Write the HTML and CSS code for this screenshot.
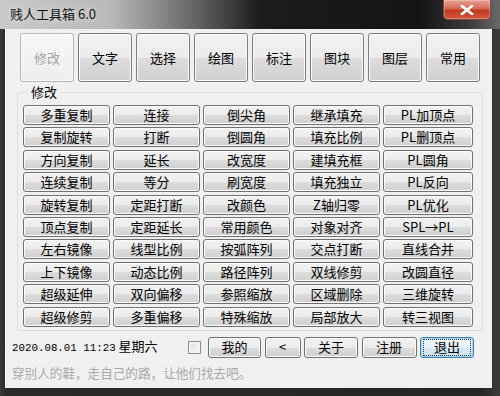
FILE: index.html
```html
<!DOCTYPE html>
<html lang="zh-CN">
<head>
    <meta charset="UTF-8">
    <title>贱人工具箱 6.0</title>
    <link rel="stylesheet" href="styles.css">
</head>
<body>
    <div class="window">
        <div class="titlebar">
            <span class="title">贱人工具箱 6.0</span>
            <span class="close">
                <svg width="14" height="10" viewBox="0 0 14 10"><path d="M2 1 L12 9 M12 1 L2 9" stroke="#fff" stroke-width="2.6" stroke-linecap="square"/></svg>
            </span>
        </div>
        <div class="client">
            <div class="tabs">
                <span class="btn tab on">修改</span>
                <span class="btn tab">文字</span>
                <span class="btn tab">选择</span>
                <span class="btn tab">绘图</span>
                <span class="btn tab">标注</span>
                <span class="btn tab">图块</span>
                <span class="btn tab">图层</span>
                <span class="btn tab">常用</span>
            </div>
            <div class="group">
                <div class="group-title">修改</div>
                <div class="grid">
                    <span class="btn">多重复制</span><span class="btn">连接</span><span class="btn">倒尖角</span><span class="btn">继承填充</span><span class="btn">PL加顶点</span>
                    <span class="btn">复制旋转</span><span class="btn">打断</span><span class="btn">倒圆角</span><span class="btn">填充比例</span><span class="btn">PL删顶点</span>
                    <span class="btn">方向复制</span><span class="btn">延长</span><span class="btn">改宽度</span><span class="btn">建填充框</span><span class="btn">PL圆角</span>
                    <span class="btn">连续复制</span><span class="btn">等分</span><span class="btn">刷宽度</span><span class="btn">填充独立</span><span class="btn">PL反向</span>
                    <span class="btn">旋转复制</span><span class="btn">定距打断</span><span class="btn">改颜色</span><span class="btn">Z轴归零</span><span class="btn">PL优化</span>
                    <span class="btn">顶点复制</span><span class="btn">定距延长</span><span class="btn">常用颜色</span><span class="btn">对象对齐</span><span class="btn">SPL→PL</span>
                    <span class="btn">左右镜像</span><span class="btn">线型比例</span><span class="btn">按弧阵列</span><span class="btn">交点打断</span><span class="btn">直线合并</span>
                    <span class="btn">上下镜像</span><span class="btn">动态比例</span><span class="btn">路径阵列</span><span class="btn">双线修剪</span><span class="btn">改圆直径</span>
                    <span class="btn">超级延伸</span><span class="btn">双向偏移</span><span class="btn">参照缩放</span><span class="btn">区域删除</span><span class="btn">三维旋转</span>
                    <span class="btn">超级修剪</span><span class="btn">多重偏移</span><span class="btn">特殊缩放</span><span class="btn">局部放大</span><span class="btn">转三视图</span>
                </div>
            </div>
            <div class="bottom">
                <span class="date"><span class="num">2020.08.01 11:23</span> 星期六</span>
                <span class="check"></span>
                <div class="actions">
                    <span class="btn act w53">我的</span>
                    <span class="btn act w36">&lt;</span>
                    <span class="btn act w54">关于</span>
                    <span class="btn act w55">注册</span>
                    <span class="btn act w54 focus"><span class="dots">退出</span></span>
                </div>
            </div>
            <p class="motto">穿别人的鞋，走自己的路，让他们找去吧。</p>
        </div>
    </div>
</body>
</html>
```

FILE: styles.css
```css
body, div, p, span{
    margin:0;
    padding:0;
}
body{
    width:500px;
    height:396px;
    overflow:hidden;
    background:#1e1e1e;
    font-family:"Noto Sans CJK SC", "Liberation Sans", sans-serif;
    font-size:13px;
    color:#000;
}
.window{
    width:500px;
    height:396px;
    background:linear-gradient(to right, #3a3a3a 0px, #2a2a2a 6px, #262626 480px, #3c3c3c 500px);
}
.titlebar{
    height:29px;
    display:flex;
    align-items:flex-start;
    justify-content:space-between;
    background:linear-gradient(to right, #c9c9c9 0px, #b9b9b9 110px, #6a6a6a 190px, #1c1c1c 260px, #141414 420px, #3c3c3c 470px, #6a6a6a 500px);
}
.title{
    margin:6px 0 0 10px;
    line-height:16px;
    font-size:13px;
    color:#111;
    text-shadow:0 0 6px rgba(255,255,255,.8);
}
.close{
    width:46px;
    height:19px;
    margin-right:9px;
    display:flex;
    align-items:center;
    justify-content:center;
    border:1px solid #7a4a40;
    border-top:none;
    border-radius:0 0 5px 5px;
    background:linear-gradient(to bottom, #e9a294 0%, #d46a55 45%, #c13a22 55%, #d5583c 100%);
    box-shadow:inset 0 0 0 1px rgba(255,255,255,.25);
}
.client{
    height:359px;
    margin:0 8px 0 5px;
    padding-top:4px;
    box-sizing:border-box;
    background:#f0f0f0;
    border-left:1px solid #fafafa;
}
.btn{
    display:flex;
    align-items:center;
    justify-content:center;
    box-sizing:border-box;
    border:1px solid #707070;
    border-radius:3px;
    background:linear-gradient(to bottom, #f2f2f2 0%, #ebebeb 50%, #dddddd 51%, #cfcfcf 100%);
    box-shadow:inset 0 0 0 1px #fbfbfb;
    white-space:nowrap;
    line-height:16px;
}
.tabs{
    display:flex;
    gap:4px;
    padding-left:14px;
}
.tab{
    width:54px;
    height:49px;
    border-color:#7a7a7a;
}
.tab.on{
    color:#a3a3a3;
    border-color:#b5b5b5;
    background:linear-gradient(to bottom, #f7f7f7, #eeeeee);
}
.group{
    margin:10px 9px 0 11px;
    padding:0 0 3px 5px;
    border:1px solid #d5dfe5;
    border-radius:3px;
}
.group-title{
    width:fit-content;
    margin:-8px 0 0 5px;
    padding:0 3px;
    line-height:14px;
    background:#f0f0f0;
}
.grid{
    margin-top:6px;
    display:grid;
    grid-template-columns:repeat(4, 87px) 90px;
    grid-auto-rows:20px;
    column-gap:3px;
    row-gap:2.4px;
}
.bottom{
    display:flex;
    align-items:center;
    height:21px;
    margin-top:6px;
    padding-left:6px;
}
.date{
    width:176px;
    line-height:16px;
}
.num{
    font-family:"Liberation Mono", monospace;
    font-size:10.8px;
}
.check{
    width:13px;
    height:13px;
    box-sizing:border-box;
    border:1px solid #8e8f8f;
    background:linear-gradient(135deg, #dcdcdc, #fbfbfb);
    box-shadow:inset 0 0 0 2px #f4f4f4;
}
.actions{
    display:flex;
    gap:3.5px;
    margin-left:7px;
}
.act{
    height:21px;
}
.w36{ width:36px; }
.w53{ width:53px; }
.w54{ width:54px; }
.w55{ width:55px; }
.focus{
    border-color:#3c7fb1;
    box-shadow:inset 0 0 0 1px #9fd6f4;
    background:linear-gradient(to bottom, #f2f8fc 0%, #e6f1f8 50%, #d8e9f3 51%, #cde2ef 100%);
}
.dots{
    width:46px;
    height:15px;
    display:flex;
    align-items:center;
    justify-content:center;
    border:1px dotted #333;
}
.motto{
    margin:8px 0 0 6px;
    line-height:14px;
    font-size:12.6px;
    color:#a8a8a8;
}
```
